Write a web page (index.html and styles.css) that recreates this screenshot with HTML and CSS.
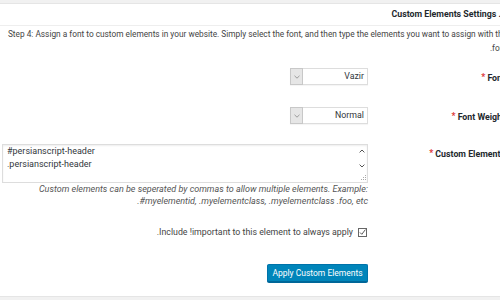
FILE: index.html
```html
<!DOCTYPE html>
<html lang="fa">
<head>
    <meta charset="UTF-8">
    <meta name="viewport" content="width=device-width, initial-scale=1.0">
    <title>Custom Elements Settings</title>
    <link rel="stylesheet" href="styles.css">
</head>
<body>
    <div class="wrap" dir="rtl">
        <div class="panel">
            <h2 class="panel-head">. Custom Elements Settings</h2>
            <p class="intro">Step 4: Assign a font to custom elements in your website. Simply select the font, and then type the elements you want to assign with the<br>font.</p>

            <div class="form">
                <div class="row row-font">
                    <div class="row-label">Font <span class="req">*</span></div>
                    <div class="row-field">
                        <div class="select">
                            <span class="select-value">Vazir</span>
                            <span class="select-arrow">
                                <svg width="6" height="4" viewBox="0 0 6 4"><path d="M0.5 0.8 L3 3.2 L5.5 0.8" fill="none" stroke="#888" stroke-width="0.8"/></svg>
                            </span>
                        </div>
                    </div>
                </div>

                <div class="row row-weight">
                    <div class="row-label">Font Weight <span class="req">*</span></div>
                    <div class="row-field">
                        <div class="select">
                            <span class="select-value">Normal</span>
                            <span class="select-arrow">
                                <svg width="6" height="4" viewBox="0 0 6 4"><path d="M0.5 0.8 L3 3.2 L5.5 0.8" fill="none" stroke="#888" stroke-width="0.8"/></svg>
                            </span>
                        </div>
                    </div>
                </div>

                <div class="row row-elements">
                    <div class="row-label">Custom Elements <span class="req">*</span></div>
                    <div class="row-field">
                        <div class="textarea">
                            <div class="textarea-text">#persianscript-header<br>.persianscript-header</div>
                            <div class="textarea-scroll">
                                <svg width="6" height="4" viewBox="0 0 6 4"><path d="M0.6 3.4 L3 1 L5.4 3.4" fill="none" stroke="#555" stroke-width="1"/></svg>
                                <svg width="6" height="4" viewBox="0 0 6 4"><path d="M0.6 0.6 L3 3 L5.4 0.6" fill="none" stroke="#555" stroke-width="1"/></svg>
                                <svg class="grip" width="5" height="5" viewBox="0 0 5 5">
                                    <rect x="4" y="0" width="1" height="1" fill="#aaa"/>
                                    <rect x="2" y="2" width="1" height="1" fill="#aaa"/>
                                    <rect x="4" y="2" width="1" height="1" fill="#aaa"/>
                                    <rect x="0" y="4" width="1" height="1" fill="#aaa"/>
                                    <rect x="2" y="4" width="1" height="1" fill="#aaa"/>
                                    <rect x="4" y="4" width="1" height="1" fill="#aaa"/>
                                </svg>
                            </div>
                        </div>
                        <div class="description">
                            <div>Custom elements can be seperated by commas to allow multiple elements. Example:</div>
                            <div>.#myelementid, .myelementclass, .myelementclass .foo, etc</div>
                        </div>
                        <label class="check">
                            <span class="check-box">
                                <svg width="9" height="9" viewBox="0 0 9 9"><rect x="0.5" y="0.5" width="8" height="8" fill="#fff" stroke="#666"/><path d="M2 4.5 L3.8 6.3 L7.4 1.6" fill="none" stroke="#444" stroke-width="0.9"/></svg>
                            </span>
                            <span>Include !important to this element to always apply.</span>
                        </label>
                        <button class="button">Apply Custom Elements</button>
                    </div>
                </div>
            </div>
        </div>
    </div>
</body>
</html>
```

FILE: styles.css
```css
body {
    margin: 0;
    background-color: #f1f1f1;
    overflow: hidden;
    font-family: Roboto, "Liberation Sans", sans-serif;
    color: #444;
}
.wrap {
    width: 520px;
    padding-top: 3px;
}
.panel {
    background-color: #fff;
    border-top: 1px solid #e5e5e5;
    border-bottom: 1px solid #e5e5e5;
    height: 292px;
}
.panel-head {
    margin: 0;
    height: 21px;
    line-height: 21px;
    padding-right: 19px;
    border-bottom: 1px solid #eee;
    font-size: 8.8px;
    font-weight: bold;
    color: #23282d;
}
.intro {
    margin: 0;
    padding: 1px 13px 0;
    font-size: 8.3px;
    line-height: 14px;
    white-space: nowrap;
}
.form {
    margin-top: 13px;
}
.row {
    display: flex;
    align-items: flex-start;
}
.row-label {
    width: 152px;
    flex-shrink: 0;
    box-sizing: border-box;
    padding-right: 15px;
    padding-top: 3px;
    font-size: 8.8px;
    line-height: 12px;
    font-weight: bold;
    color: #23282d;
}
.req {
    color: #dc3232;
    margin-left: 2px;
    vertical-align: 1px;
}
.row-field {
    flex: 1;
}
.row-font {
    margin-bottom: 22px;
}
.row-weight {
    margin-bottom: 20px;
}
.select {
    display: flex;
    width: 78px;
    height: 17px;
    box-sizing: border-box;
    border: 1px solid #ddd;
    box-shadow: 0 1px 1px rgba(0, 0, 0, 0.04);
}
.select-value {
    flex: 1;
    padding-right: 3px;
    font-size: 8.8px;
    line-height: 15px;
    color: #32373c;
}
.select-arrow {
    width: 11px;
    display: flex;
    align-items: center;
    justify-content: center;
    background-color: #e6e6e6;
    border: 1px solid #c8c8c8;
    margin: -1px;
}
.textarea {
    direction: ltr;
    display: flex;
    width: 366px;
    height: 39px;
    box-sizing: border-box;
    border: 1px solid #ddd;
    box-shadow: inset 0 1px 2px rgba(0, 0, 0, 0.07);
}
.textarea-text {
    flex: 1;
    padding: 0 4px;
    font-size: 9px;
    line-height: 13px;
    color: #32373c;
}
.textarea-scroll {
    width: 10px;
    display: flex;
    flex-direction: column;
    align-items: center;
    padding-top: 4px;
    gap: 11px;
}
.grip {
    margin-top: -4px;
    margin-left: 2px;
}
.description {
    direction: ltr;
    text-align: right;
    width: 366px;
    margin-top: 1px;
    font-size: 9px;
    line-height: 11.5px;
    font-style: italic;
    color: #555;
}
.check {
    display: flex;
    align-items: center;
    gap: 5px;
    margin-top: 19px;
    height: 12px;
    font-size: 8.8px;
    color: #444;
}
.check-box {
    display: flex;
    margin-right: 1px;
}
.button {
    display: block;
    margin-top: 26px;
    width: 101px;
    height: 18px;
    padding: 0;
    font-family: inherit;
    font-size: 8.5px;
    color: #fff;
    background-color: #0085ba;
    border: 1px solid #0073aa;
    border-bottom-color: #006799;
    border-radius: 2px;
    box-shadow: 0 1px 0 #006799;
}
```
